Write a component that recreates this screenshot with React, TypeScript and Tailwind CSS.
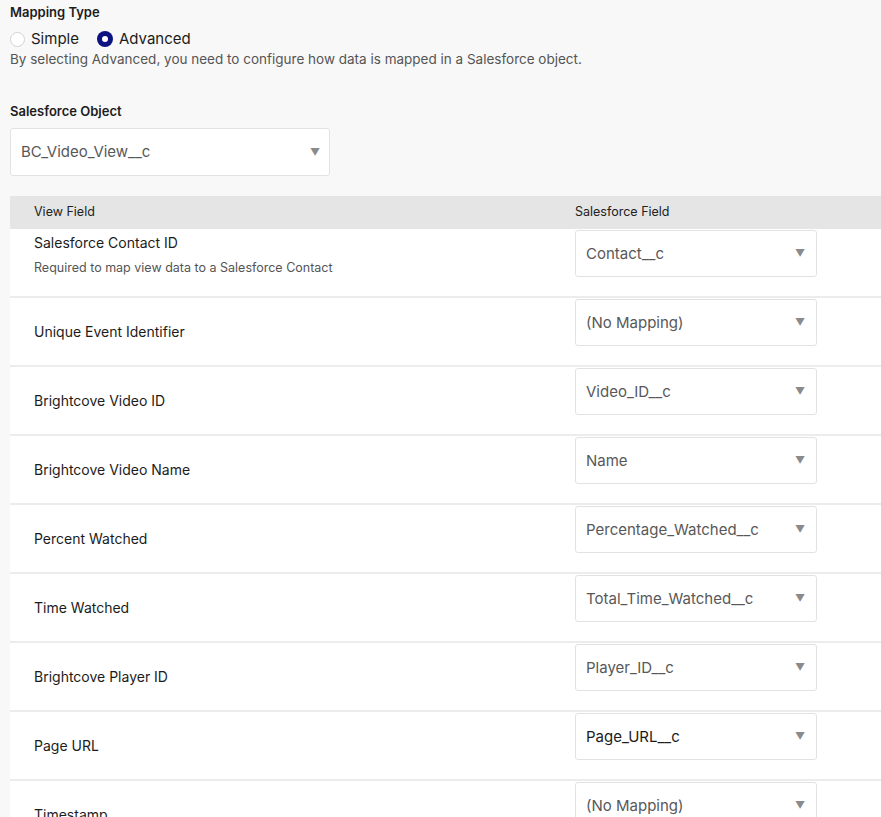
import React from "react";

type Row = {
  label: string;
  hint?: string;
  value: string;
  dark?: boolean;
};

const rows: Row[] = [
  {
    label: "Salesforce Contact ID",
    hint: "Required to map view data to a Salesforce Contact",
    value: "Contact__c",
  },
  { label: "Unique Event Identifier", value: "(No Mapping)" },
  { label: "Brightcove Video ID", value: "Video_ID__c" },
  { label: "Brightcove Video Name", value: "Name" },
  { label: "Percent Watched", value: "Percentage_Watched__c" },
  { label: "Time Watched", value: "Total_Time_Watched__c" },
  { label: "Brightcove Player ID", value: "Player_ID__c" },
  { label: "Page URL", value: "Page_URL__c", dark: true },
  { label: "Timestamp", value: "(No Mapping)" },
];

const SelectBox = ({ value, dark }: { value: string; dark?: boolean }) => {
  return (
    <div className="w-[242px] h-[47px] flex items-center justify-between bg-white border border-[#e2e2e2] rounded-[3px] pl-[10px] pr-[11px]">
      <span
        className={`text-[15px] ${dark ? "text-[#1c1c1c]" : "text-[#585858]"}`}
      >
        {value}
      </span>
      <span className="text-[10px] text-[#8a8a8a]">▼</span>
    </div>
  );
};

const App = () => {
  return (
    <div className="min-h-screen bg-[#f8f8f8] text-[#1c1c1c] font-['Inter','Liberation_Sans',sans-serif] overflow-hidden h-[817px]">
      <div className="pl-[10px] pt-[3px]">
        <h4 className="text-[13px] font-semibold leading-[18px]">Mapping Type</h4>
        <div className="flex items-center gap-[18px] mt-[8px] h-[20px]">
          <label className="flex items-center gap-[6px] text-[15px]">
            <span className="w-[15px] h-[15px] rounded-full border border-[#d2d2d2] bg-white" />
            Simple
          </label>
          <label className="flex items-center gap-[6px] text-[15px]">
            <span className="w-[16px] h-[16px] rounded-full bg-[#0c1280] flex items-center justify-center">
              <span className="w-[6px] h-[6px] rounded-full bg-white" />
            </span>
            Advanced
          </label>
        </div>
        <p className="text-[13.5px] text-[#555]">
          By selecting Advanced, you need to configure how data is mapped in a Salesforce object.
        </p>
        <h4 className="text-[13px] font-semibold leading-[18px] mt-[33px]">Salesforce Object</h4>
        <div className="w-[320px] h-[48px] mt-[8px] flex items-center justify-between bg-white border border-[#e2e2e2] rounded-[3px] pl-[10px] pr-[9px]">
          <span className="text-[15px] text-[#585858]">BC_Video_View__c</span>
          <span className="text-[10px] text-[#8a8a8a]">▼</span>
        </div>
      </div>

      <div className="ml-[10px] mt-[20px] bg-white">
        <div className="grid grid-cols-[565px_1fr] h-[33px] items-center bg-[#e4e5e4] text-[12.5px] text-[#222]">
          <span className="pl-[24px]">View Field</span>
          <span>Salesforce Field</span>
        </div>
        {rows.map((row) => (
          <div
            key={row.label}
            className="grid grid-cols-[565px_1fr] h-[69px] border-b-2 border-[#ececec]"
          >
            {row.hint ? (
              <div className="pl-[24px] pt-[4px]">
                <div className="text-[14px] leading-[20px]">{row.label}</div>
                <div className="text-[12.5px] text-[#555] mt-[6px]">{row.hint}</div>
              </div>
            ) : (
              <div className="pl-[24px] self-center text-[14px]">{row.label}</div>
            )}
            <div className="pt-[1px]">
              <SelectBox value={row.value} dark={row.dark} />
            </div>
          </div>
        ))}
      </div>
    </div>
  );
};

export default App;
